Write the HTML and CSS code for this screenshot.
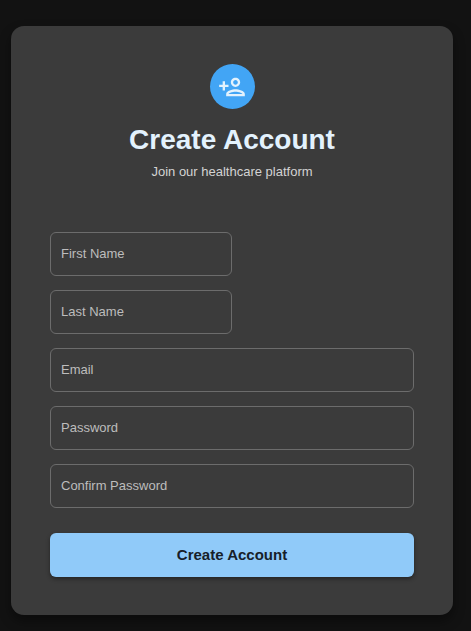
FILE: index.html
```html
<!DOCTYPE html>
<html lang="en">
<head>
<meta charset="utf-8">
<meta name="viewport" content="width=device-width, initial-scale=1">
<title>Create Account</title>
<link rel="stylesheet" href="styles.css">
</head>
<body>
<main class="card">
  <header class="intro">
    <div class="badge">
      <svg class="badge-icon" viewBox="0 0 24 24" aria-hidden="true"><path d="M15 12c2.21 0 4-1.79 4-4s-1.79-4-4-4-4 1.79-4 4 1.79 4 4 4zm0-6c1.1 0 2 .9 2 2s-.9 2-2 2-2-.9-2-2 .9-2 2-2zm0 8c-2.67 0-8 1.34-8 4v2h16v-2c0-2.66-5.33-4-8-4zm-6 4c.22-.72 3.31-2 6-2 2.7 0 5.8 1.29 6 2H9zm-3-3v-3h3v-2H6V7H4v3H1v2h3v3z"/></svg>
    </div>
    <h1 class="title">Create Account</h1>
    <p class="subtitle">Join our healthcare platform</p>
  </header>
  <form class="form">
    <div class="field field-half">
      <input class="input" id="first" type="text" placeholder=" " autocomplete="given-name">
      <label class="label" for="first">First Name</label>
    </div>
    <div class="field field-half">
      <input class="input" id="last" type="text" placeholder=" " autocomplete="family-name">
      <label class="label" for="last">Last Name</label>
    </div>
    <div class="field">
      <input class="input" id="email" type="email" placeholder=" " autocomplete="email">
      <label class="label" for="email">Email</label>
    </div>
    <div class="field">
      <input class="input" id="password" type="password" placeholder=" " autocomplete="new-password">
      <label class="label" for="password">Password</label>
    </div>
    <div class="field">
      <input class="input" id="confirm" type="password" placeholder=" " autocomplete="new-password">
      <label class="label" for="confirm">Confirm Password</label>
    </div>
    <button class="submit" type="submit">Create Account</button>
  </form>
</main>
</body>
</html>
```
FILE: styles.css
```css
* {
  box-sizing: border-box;
}

body {
  margin: 0;
  padding: 26px 18px 16px 11px;
  background: #121212;
  color: #fff;
  font-family: "Liberation Sans", Helvetica, Arial, sans-serif;
}

.card {
  max-width: 480px;
  margin: 0 auto;
  padding: 38px 39px;
  border-radius: 13px;
  background: #3b3b3b;
  box-shadow: 0 6px 12px rgba(0, 0, 0, 0.4);
}

.intro {
  display: flex;
  flex-direction: column;
  align-items: center;
  margin-bottom: 50px;
}

.badge {
  display: grid;
  place-items: center;
  width: 45px;
  height: 45px;
  margin-bottom: 14px;
  border-radius: 50%;
  background: #42a5f5;
}

.badge-icon {
  width: 28px;
  height: 28px;
  fill: #e3f2fd;
}

.title {
  margin: 0 0 5px;
  color: #e3f2fd;
  font-size: 28px;
  font-weight: 700;
  line-height: 34px;
}

.subtitle {
  margin: 0;
  color: #d3d3d3;
  font-size: 13px;
  line-height: 20px;
}

.form {
  display: flex;
  flex-direction: column;
  gap: 14px;
}

.field {
  display: grid;
  align-items: center;
}

.field-half {
  width: 50%;
}

.input,
.label {
  grid-area: 1 / 1;
}

.input {
  width: 100%;
  height: 44px;
  padding: 0 10px;
  border: 1px solid #6c6c6c;
  border-radius: 6px;
  outline: 0;
  background: transparent;
  color: #fff;
  font: inherit;
  font-size: 13px;
}

.input:focus {
  border-color: #90caf9;
}

.label {
  padding-left: 11px;
  color: #bdbdbd;
  font-size: 13px;
  line-height: 18px;
  pointer-events: none;
}

.input:focus + .label,
.input:not(:placeholder-shown) + .label {
  align-self: start;
  font-size: 10px;
}

.submit {
  height: 44px;
  margin-top: 11px;
  padding: 0 16px 2px;
  border: 0;
  border-radius: 6px;
  background: #90caf9;
  box-shadow: 0 2px 4px rgba(0, 0, 0, 0.4);
  color: #172029;
  font: inherit;
  font-size: 15px;
  font-weight: 700;
  cursor: pointer;
}
```
